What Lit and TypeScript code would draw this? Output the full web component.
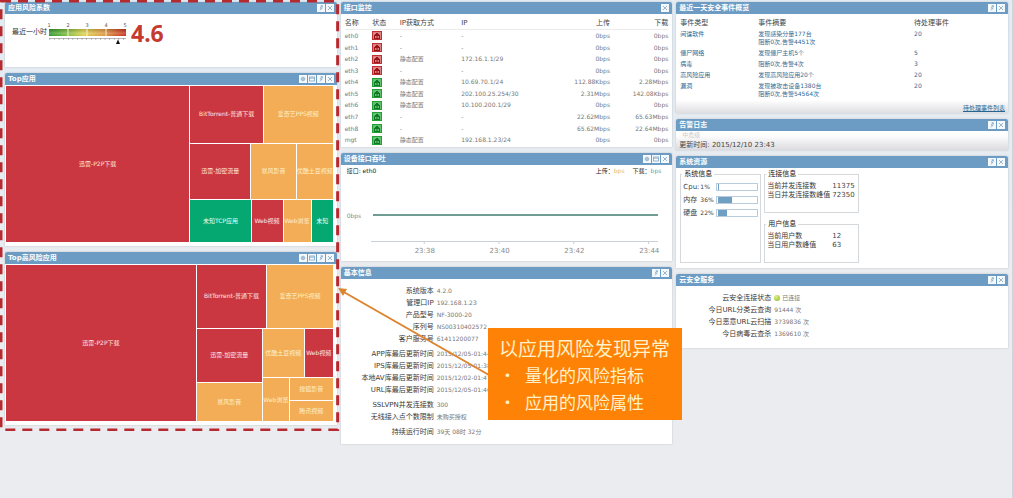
import { LitElement, html, svg, css, nothing } from "lit";
import { customElement, property } from "lit/decorators.js";
import { classMap } from "lit/directives/class-map.js";

type Action = "gear" | "window" | "refresh" | "close";

interface Tile {
  size: number;
  label?: string;
  tone?: "red" | "orange" | "green";
  dir?: "row" | "column";
  children?: Tile[];
}

const red = (size: number, label: string): Tile => ({ size, label, tone: "red" });
const orange = (size: number, label: string): Tile => ({ size, label, tone: "orange" });
const green = (size: number, label: string): Tile => ({ size, label, tone: "green" });
const row = (size: number, ...children: Tile[]): Tile => ({ size, dir: "row", children });
const column = (size: number, ...children: Tile[]): Tile => ({ size, dir: "column", children });

const TOP_APPS = row(
  1,
  red(183, "迅雷-P2P下载"),
  column(
    142,
    row(57, red(73, "BitTorrent-普通下载"), orange(69, "爱奇艺PPS视频")),
    row(56, red(60, "迅雷-加密流量"), orange(45, "暴风影音"), orange(36, "优酷土豆视频")),
    row(42, green(60, "未知TCP应用"), red(31, "Web视频"), orange(27, "Web浏览"), green(21, "未知")),
  ),
);

const TOP_RISK_APPS = row(
  1,
  red(190, "迅雷-P2P下载"),
  column(
    136,
    row(63, red(69, "BitTorrent-普通下载"), orange(65, "爱奇艺PPS视频")),
    row(
      93,
      column(65, red(53, "迅雷-加密流量"), orange(38, "暴风影音")),
      column(
        70,
        row(49, orange(41, "优酷土豆视频"), red(28, "Web视频")),
        row(43, orange(26, "Web浏览"), column(42, orange(21, "搜狐影音"), orange(20, "腾讯视频"))),
      ),
    ),
  ),
);

const PORTS: [string, boolean, string, string, string, string][] = [
  ["eth0", false, "-", "-", "0bps", "0bps"],
  ["eth1", false, "-", "-", "0bps", "0bps"],
  ["eth2", false, "静态配置", "172.16.1.1/29", "0bps", "0bps"],
  ["eth3", false, "-", "-", "0bps", "0bps"],
  ["eth4", true, "静态配置", "10.69.70.1/24", "112.88Kbps", "2.28Mbps"],
  ["eth5", true, "静态配置", "202.100.25.254/30", "2.31Mbps", "142.08Kbps"],
  ["eth6", true, "静态配置", "10.100.200.1/29", "0bps", "0bps"],
  ["eth7", true, "-", "-", "22.62Mbps", "65.63Mbps"],
  ["eth8", true, "-", "-", "65.62Mbps", "22.64Mbps"],
  ["mgt", true, "静态配置", "192.168.1.23/24", "0bps", "0bps"],
];

const EVENTS: [string, string[], number][] = [
  ["间谍软件", ["发现感染分量177台", "阻断0次,告警4451次"], 20],
  ["僵尸网络", ["发现僵尸主机5个"], 5],
  ["病毒", ["阻断0次,告警4次"], 3],
  ["高风险应用", ["发现高风险应用20个"], 20],
  ["漏洞", ["发现被攻击设备1380台", "阻断0次,告警54564次"], 20],
];

const BASICS: [string, string][][] = [
  [
    ["系统版本", "4.2.0"],
    ["管理口IP", "192.168.1.23"],
    ["产品型号", "NF-3000-20"],
    ["序列号", "NS00310402572"],
    ["客户服务号", "61411200077"],
  ],
  [
    ["APP库最后更新时间", "2015/12/05-01:44"],
    ["IPS库最后更新时间", "2015/12/05-01:38"],
    ["本地AV库最后更新时间", "2015/12/02-01:47"],
    ["URL库最后更新时间", "2015/12/05-01:46"],
  ],
  [
    ["SSLVPN并发连接数", "300"],
    ["无线接入点个数限制", "未购买授权"],
  ],
  [["持续运行时间", "39天 08时 32分"]],
];

const LOADS: [string, number][] = [
  ["Cpu:", 1],
  ["内存", 36],
  ["硬盘", 22],
];

const ICONS: Record<Action, [string, unknown]> = {
  gear: ["设置", svg`<circle cx="4" cy="4" r="1.8"/><path d="M4 3v2M3 4h2"/>`],
  window: ["窗口", svg`<rect x="1.5" y="2" width="5" height="4"/><path d="M1.5 3.2h5"/>`],
  refresh: ["刷新", svg`<path d="M3 6.4 5 4.2H3.2L5 1.6M3.6 1.8H5.4V3.4"/>`],
  close: ["关闭", svg`<path d="M2 2l4 4M6 2l-4 4"/>`],
};

@customElement("dash-panel")
export class DashPanel extends LitElement {
  @property() heading = "";
  @property({ attribute: false }) actions: Action[] = [];

  static styles = css`
    :host {
      display: block;
      border-radius: 2px 2px 0 0;
      box-shadow: 0 0 2px #b4bac2;
      background: #fff;
    }
    .bar {
      display: flex;
      align-items: center;
      gap: 1px;
      height: 12px;
      padding: 0 3px;
      background: #6c9cc3;
      border-radius: 2px 2px 0 0;
    }
    h2 {
      flex: 1;
      margin: 0;
      color: #fff;
      font-size: 7px;
      line-height: 12px;
      font-weight: 700;
    }
    button {
      display: block;
      width: 8px;
      height: 8px;
      padding: 0;
      border: 0;
      background: #f5f9fc;
      cursor: pointer;
    }
    svg {
      display: block;
      fill: none;
      stroke: #7fa5c4;
      stroke-width: 0.8;
    }
  `;

  render() {
    return html`
      <div class="bar">
        <h2>${this.heading}</h2>
        ${this.actions.map(
          (a) => html`<button type="button" aria-label=${ICONS[a][0]}>
            <svg width="8" height="8" viewBox="0 0 8 8">${ICONS[a][1]}</svg>
          </button>`,
        )}
      </div>
      <slot></slot>
    `;
  }
}

@customElement("tree-map")
export class TreeMap extends LitElement {
  @property({ attribute: false }) root!: Tile;

  static styles = css`
    :host {
      display: flex;
      height: 156px;
      padding: 1px 4px 4px 1px;
    }
    .group {
      display: flex;
      gap: 1px;
      min-width: 0;
      min-height: 0;
    }
    .column {
      flex-direction: column;
    }
    .tile {
      display: flex;
      align-items: center;
      justify-content: center;
      min-width: 0;
      min-height: 0;
      overflow: hidden;
      color: #ffe9e0;
      font-size: 6px;
      line-height: 8px;
      white-space: nowrap;
    }
    .red {
      background: #cb3740;
    }
    .orange {
      background: #f2ad56;
      color: #fff0cf;
    }
    .green {
      background: #04a870;
      color: #e6fff4;
    }
  `;

  private draw(t: Tile): unknown {
    const grow = `flex:${t.size} ${t.size} 0`;
    return t.children
      ? html`<div class=${classMap({ group: true, column: t.dir === "column" })} style=${grow}>
          ${t.children.map((c) => this.draw(c))}
        </div>`
      : html`<div class="tile ${t.tone}" style=${grow}>${t.label}</div>`;
  }

  render() {
    return this.root ? this.draw(this.root) : nothing;
  }
}

@customElement("risk-gauge")
export class RiskGauge extends LitElement {
  static styles = css`
    :host {
      display: block;
    }
    svg {
      display: block;
      font-size: 5px;
      fill: #555;
    }
  `;

  render() {
    return html`
      <svg width="82" height="24" viewBox="0 0 82 24" role="img" aria-label="风险系数">
        <defs>
          <linearGradient id="scale">
            <stop offset="0" stop-color="#2f962b" />
            <stop offset="0.2" stop-color="#6fb53a" />
            <stop offset="0.45" stop-color="#dcd04c" />
            <stop offset="0.7" stop-color="#dd9a3e" />
            <stop offset="1" stop-color="#c52e1c" />
          </linearGradient>
          <linearGradient id="shade" x2="0" y2="1">
            <stop offset="0" stop-color="#000" stop-opacity="0.15" />
            <stop offset="0.6" stop-color="#fff" stop-opacity="0.2" />
            <stop offset="1" stop-color="#fff" stop-opacity="0" />
          </linearGradient>
        </defs>
        ${[1, 2, 3, 4, 5].map(
          (n) => svg`<text x=${2 + (n - 1) * 19} y="5" text-anchor="middle">${n}</text>`,
        )}
        <rect x="2" y="7" width="77" height="7" fill="url(#scale)" />
        <rect x="2" y="7" width="77" height="7" fill="url(#shade)" />
        ${[1, 2, 3].map(
          (n) => svg`<path d="M${2 + n * 19} 7v7" stroke="#f5f3d8" stroke-width="1"/>`,
        )}
        <path d="M2 16.5H79" stroke="#888" stroke-width="0.6" />
        <path d="M2.5 17H79" stroke="#888" stroke-width="1.5" stroke-dasharray="0.7 3.9" />
        <path d="M71 17.5l2 4.5h-4z" fill="#111" />
      </svg>
    `;
  }
}

@customElement("app-root")
export class AppRoot extends LitElement {
  static styles = css`
    :host {
      display: block;
      position: relative;
      box-sizing: border-box;
      min-height: 100vh;
      overflow: hidden;
      background: linear-gradient(#e3ebf3, #ebecef 320px);
      border-right: 1px solid #cfd3db;
      color: #555;
      font-family: "DejaVu Sans", "Noto Sans CJK SC", sans-serif;
      font-size: 6px;
      line-height: 8px;
    }
    .columns {
      display: grid;
      grid-template-columns: repeat(3, minmax(0, 1fr));
      gap: 4px;
      align-items: start;
      padding: 2px 4px 0 5px;
    }
    .stack {
      position: relative;
      display: grid;
      gap: 6px;
    }
    .marquee {
      position: absolute;
      inset: -2px -3px -6px -5px;
      width: calc(100% + 8px);
      height: calc(100% + 8px);
      pointer-events: none;
    }
    .marquee rect {
      width: calc(100% - 3px);
      height: calc(100% - 2px);
      fill: none;
      stroke: #b5292f;
      stroke-width: 3px;
      stroke-dasharray: 10px 7px;
    }

    .risk {
      display: flex;
      align-items: flex-start;
      height: 37px;
      padding: 8px 7px;
      color: #333;
      font-size: 7px;
    }
    .risk .when {
      padding-top: 6px;
    }
    .score {
      padding-left: 2px;
      color: #c5392f;
      font-family: "Noto Sans", sans-serif;
      font-size: 23px;
      line-height: 22px;
      font-weight: 700;
    }

    table {
      width: 100%;
      border-collapse: collapse;
      table-layout: fixed;
    }
    th,
    td {
      padding: 0;
      text-align: left;
      font-weight: 400;
      vertical-align: middle;
      white-space: nowrap;
    }
    th {
      height: 12px;
      color: #444;
      font-size: 7px;
    }
    .num {
      text-align: right;
    }
    .ports {
      padding: 3px 4px 1px;
    }
    .ports table {
      height: 129px;
    }
    .ports thead {
      border-bottom: 1px solid #ececec;
    }
    .ports td {
      color: #777;
    }
    .c8 {
      width: 8.5%;
    }
    .c19 {
      width: 19%;
    }
    .c27 {
      width: 27%;
    }
    .jack {
      display: block;
    }

    .throughput {
      padding: 2px 8px 5px 6px;
    }
    .legend {
      display: flex;
      gap: 8px;
      padding-right: 3px;
      color: #222;
    }
    .legend .port {
      flex: 1;
    }
    .up {
      color: #e3b95c;
    }
    .down {
      color: #4f9fb5;
    }
    .plot {
      display: grid;
      grid-template-columns: 24px 1fr;
      padding-right: 6px;
    }
    .plot .unit {
      padding-top: 37px;
      color: #888;
      font-size: 6px;
    }
    .plot svg {
      display: block;
      width: 100%;
      height: 69px;
    }
    .times {
      display: flex;
      justify-content: space-between;
      margin-left: 68px;
      padding: 2px 5px 0 0;
      color: #888;
      font-size: 7px;
      line-height: 10px;
    }

    .facts {
      display: grid;
      gap: 3px;
      margin: 0;
      padding: 6px 0;
    }
    .facts > div {
      display: grid;
    }
    .facts .fact {
      display: grid;
      grid-template-columns: 93px 1fr;
      gap: 3px;
      line-height: 12px;
    }
    dt {
      color: #3a3a3a;
      font-size: 7px;
    }
    dd {
      margin: 0;
    }
    .facts dt {
      text-align: right;
      white-space: nowrap;
    }
    .facts dd {
      color: #777;
    }

    a {
      color: #27648f;
      text-decoration: none;
    }
    .events {
      padding: 3px 3px 0 4px;
    }
    .events tbody tr {
      height: 11px;
    }
    .events tr.tall {
      height: 19px;
    }
    .events td {
      padding-top: 1px;
      vertical-align: top;
      color: #2d6c98;
    }
    .c23 {
      width: 24%;
    }
    .c48 {
      width: 48%;
    }
    .more {
      height: 13px;
      padding: 0 3px;
      text-align: right;
      line-height: 15px;
      background: linear-gradient(#fff, #dedee2);
    }
    .more a {
      text-decoration: underline;
      font-size: 6px;
    }

    .alarm {
      height: 19px;
      overflow: hidden;
      padding: 0 3px;
      background: linear-gradient(#fff 20%, #dcdce0);
      box-sizing: border-box;
      color: #444;
      font-size: 7px;
    }
    .alarm .level {
      padding-left: 3px;
      color: #ccc;
      font-size: 6px;
    }
    .alarm .time {
      line-height: 12px;
    }

    .resources {
      display: grid;
      grid-template-columns: 81px 95px;
      gap: 6px 3px;
      padding: 1px 4px 5px;
    }
    fieldset {
      min-width: 0;
      margin: 0;
      padding: 1px 2px 0;
      border: 1px solid #d6d9dc;
      color: #444;
    }
    fieldset.tall {
      grid-row: span 2;
    }
    fieldset dl,
    fieldset dd,
    fieldset dt {
      margin: 0;
      line-height: 9px;
      font-size: 7px;
      white-space: nowrap;
    }
    fieldset dl {
      display: grid;
      grid-template-columns: 65px 1fr;
      height: 32px;
      padding-top: 2px;
      align-content: start;
      box-sizing: border-box;
    }
    legend {
      margin-left: -1px;
      padding: 0 2px;
      color: #222;
      font-size: 7px;
      line-height: 10px;
    }
    .load {
      display: grid;
      grid-template-columns: 17px 16px 1fr;
      align-items: center;
      height: 13px;
      font-size: 7px;
      white-space: nowrap;
    }
    .load .pct {
      font-size: 6px;
    }
    .meter {
      height: 6px;
      padding: 0 1px;
      border: 1px solid #b9ccdb;
    }
    .fill {
      height: 6px;
      background: #6f9fc3;
    }

    .cloud {
      padding: 6px 0 8px;
    }
    .cloud .fact {
      grid-template-columns: 95px 1fr;
    }
    .state {
      display: flex;
      align-items: center;
      gap: 2px;
    }
    .dot {
      width: 6px;
      height: 6px;
      border-radius: 3px;
      background: radial-gradient(circle at 35% 30%, #e3f08a, #86b81d);
    }

    .pointer {
      position: absolute;
      left: 338px;
      top: 287px;
    }
    .callout {
      position: absolute;
      left: 488px;
      top: 328px;
      width: 194px;
      box-sizing: border-box;
      padding: 6px 11px 5px;
      background: #fe8205;
      color: #fff1c9;
      font-family: "Noto Sans CJK SC", sans-serif;
      font-size: 17px;
      line-height: 27px;
      white-space: nowrap;
    }
    .callout h3 {
      margin: 0;
      font-size: 19px;
      line-height: 27px;
      font-weight: 400;
    }
    .callout ul {
      margin: 0;
      padding: 0;
      list-style: none;
    }
    .callout li {
      display: grid;
      grid-template-columns: 26px 1fr;
    }
  `;

  private jack(up: boolean) {
    const [edge, face, dark] = up ? ["#22a036", "#63c070", "#0f7a25"] : ["#bf2f35", "#d98283", "#9c1219"];
    return html`<svg class="jack" width="10" height="9" viewBox="0 0 10 9" role="img" aria-label=${up ? "已连接" : "未连接"}>
      <rect x="0.5" y="0.5" width="9" height="8" fill=${face} stroke=${edge} />
      <path d="M2 8V4H3V3H4V2H6V3H7V4H8V8Z" fill=${dark} />
      <path d="M3 5H7V7H3Z" fill=${face} />
      <path d="M4.5 5V7M5.5 5V7" stroke=${dark} stroke-width="0.5" />
    </svg>`;
  }

  private fact(label: string, value: unknown) {
    return html`<div class="fact"><dt>${label}</dt><dd>${value}</dd></div>`;
  }

  private left() {
    const full: Action[] = ["gear", "window", "refresh", "close"];
    return html`<div class="stack">
      <dash-panel heading="应用风险系数" .actions=${["refresh", "close"]}>
        <div class="risk">
          <span class="when">最近一小时</span>
          <risk-gauge></risk-gauge>
          <span class="score">4.6</span>
        </div>
      </dash-panel>
      <dash-panel heading="Top应用" .actions=${full}><tree-map .root=${TOP_APPS}></tree-map></dash-panel>
      <dash-panel heading="Top高风险应用" .actions=${full}><tree-map .root=${TOP_RISK_APPS}></tree-map></dash-panel>
      <svg class="marquee" aria-hidden="true"><rect x="1" y="1" /></svg>
    </div>`;
  }

  private middle() {
    return html`<div class="stack">
      <dash-panel heading="接口监控" .actions=${["close"]}>
        <div class="ports">
          <table>
            <thead>
              <tr>
                <th class="c8">名称</th>
                <th class="c8">状态</th>
                <th class="c19">IP获取方式</th>
                <th class="c19">IP</th>
                <th class="c27 num">上传</th>
                <th class="num">下载</th>
              </tr>
            </thead>
            <tbody>
              ${PORTS.map(
                ([name, up, mode, ip, tx, rx]) => html`<tr>
                  <td>${name}</td>
                  <td>${this.jack(up)}</td>
                  <td>${mode}</td>
                  <td>${ip}</td>
                  <td class="num">${tx}</td>
                  <td class="num">${rx}</td>
                </tr>`,
              )}
            </tbody>
          </table>
        </div>
      </dash-panel>
      <dash-panel heading="设备接口吞吐" .actions=${["gear", "window", "close"]}>
        <div class="throughput">
          <div class="legend">
            <span class="port">接口: eth0</span>
            <span>上传：<span class="up">bps</span></span>
            <span>下载：<span class="down">bps</span></span>
          </div>
          <div class="plot">
            <span class="unit">0bps</span>
            <svg aria-hidden="true">
              <line x1="2" x2="100%" y1="40" y2="40" stroke="#6f9c93" stroke-width="2" />
              <line x1="0" x2="100%" y1="66.5" y2="66.5" stroke="#c9d0d6" />
              ${["18.5%", "44.5%", "70.5%", "96.5%"].map(
                (x) => svg`<line x1=${x} x2=${x} y1="66" y2="69" stroke="#c9d0d6"/>`,
              )}
            </svg>
          </div>
          <div class="times"><span>23:38</span><span>23:40</span><span>23:42</span><span>23:44</span></div>
        </div>
      </dash-panel>
      <dash-panel heading="基本信息" .actions=${["refresh", "close"]}>
        <dl class="facts">
          ${BASICS.map((g) => html`<div>${g.map(([k, v]) => this.fact(k, v))}</div>`)}
        </dl>
      </dash-panel>
    </div>`;
  }

  private right() {
    const pair: Action[] = ["refresh", "close"];
    return html`<div class="stack">
      <dash-panel heading="最近一天安全事件概览" .actions=${pair}>
        <div class="events">
          <table>
            <thead>
              <tr>
                <th class="c23">事件类型</th>
                <th class="c48">事件摘要</th>
                <th>待处理事件</th>
              </tr>
            </thead>
            <tbody>
              ${EVENTS.map(
                ([type, lines, n]) => html`<tr class=${classMap({ tall: lines.length > 1 })}>
                  <td><a href="#">${type}</a></td>
                  <td>${lines.map((l) => html`<div>${l}</div>`)}</td>
                  <td>${n}</td>
                </tr>`,
              )}
            </tbody>
          </table>
        </div>
        <div class="more"><a href="#">待处理事件列表</a></div>
      </dash-panel>
      <dash-panel heading="告警日志" .actions=${pair}>
        <div class="alarm">
          <div class="level">中危级</div>
          <div class="time">更新时间: 2015/12/10 23:43</div>
        </div>
      </dash-panel>
      <dash-panel heading="系统资源" .actions=${pair}>
        <div class="resources">
          <fieldset class="tall">
            <legend>系统信息</legend>
            ${LOADS.map(
              ([name, pct]) => html`<div class="load">
                <span>${name}</span><span class="pct">${pct}%</span>
                <div class="meter"><div class="fill" style="width:${pct}%"></div></div>
              </div>`,
            )}
          </fieldset>
          <fieldset>
            <legend>连接信息</legend>
            <dl>
              <dt>当前并发连接数</dt><dd>11375</dd>
              <dt>当日并发连接数峰值</dt><dd>72350</dd>
            </dl>
          </fieldset>
          <fieldset>
            <legend>用户信息</legend>
            <dl>
              <dt>当前用户数</dt><dd>12</dd>
              <dt>当日用户数峰值</dt><dd>63</dd>
            </dl>
          </fieldset>
        </div>
      </dash-panel>
      <dash-panel heading="云安全服务" .actions=${pair}>
        <dl class="facts cloud">
          <div>
            ${this.fact("云安全连接状态", html`<span class="state"><span class="dot"></span>已连接</span>`)}
            ${this.fact("今日URL分类云查询", "91444 次")}
            ${this.fact("今日恶意URL云扫描", "3739836 次")}
            ${this.fact("今日病毒云查杀", "1369610 次")}
          </div>
        </dl>
      </dash-panel>
    </div>`;
  }

  render() {
    return html`
      <main class="columns">${this.left()} ${this.middle()} ${this.right()}</main>
      <svg class="pointer" width="152" height="90" viewBox="0 0 152 90" aria-hidden="true">
        <path d="M4 4 151 88" stroke="#dc842e" stroke-width="2" />
        <path d="M0 1 9 2 5 9Z" fill="#dc842e" />
      </svg>
      <aside class="callout">
        <h3>以应用风险发现异常</h3>
        <ul>
          <li><span>•</span>量化的风险指标</li>
          <li><span>•</span>应用的风险属性</li>
        </ul>
      </aside>
    `;
  }
}
